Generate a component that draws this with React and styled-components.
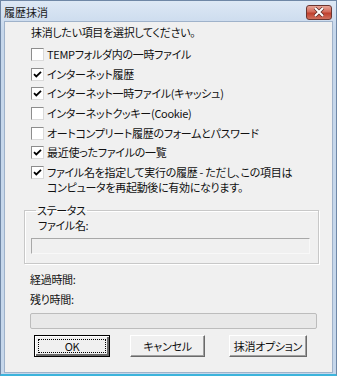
import React from "react";
import styled, { createGlobalStyle } from "styled-components";

const Global = createGlobalStyle`
  html, body { margin: 0; padding: 0; background: #ffffff; }
  body { font-family: "Noto Sans CJK JP", "Noto Sans", sans-serif; font-size: 11px; color: #000; }
  * { box-sizing: border-box; }
`;

const Window = styled.div`
  width: 337px;
  height: 376px;
  display: flex;
  flex-direction: column;
  background: linear-gradient(#dde8f5, #c6d7eb 30px, #c6d7eb);
  border: 1px solid #6f87a6;
  border-bottom: 2px solid #3cb4dc;
  padding: 0 3px 1px 3px;
`;

const TitleBar = styled.div`
  height: 20px;
  display: flex;
  align-items: center;
  justify-content: space-between;
  padding: 0 1px 0 0;
`;

const Title = styled.span`
  font-size: 11px;
  line-height: 15px;
  font-feature-settings: "palt";
  color: #1a1a1a;
  margin-top: 2px;
`;

const CloseButton = styled.div`
  width: 26px;
  height: 15px;
  margin-top: 2px;
  border-radius: 3px;
  border: 1px solid #6a3530;
  background: linear-gradient(#e8a496, #d26a5a 45%, #c0402d 55%, #d0705e);
  display: flex;
  align-items: center;
  justify-content: center;
`;

const Body = styled.div`
  flex: 1;
  background: #f0f0f0;
  border: 1px solid #9fb2ca;
  display: flex;
  flex-direction: column;
  padding: 3px 14px 0 19px;
  font-feature-settings: "palt";
  letter-spacing: -0.3px;
  line-height: 15px;
  color: #111;
`;

const Text = styled.div`
  margin-left: ${(p) => p.$indent || 0}px;
  margin-top: ${(p) => p.$top || 0}px;
  white-space: nowrap;
`;

const List = styled.div`
  display: flex;
  flex-direction: column;
  margin-top: 5px;
  margin-left: 7px;
`;

const Row = styled.div`
  display: flex;
  align-items: flex-start;
  padding: 2.3px 0;
`;

const Box = styled.span`
  flex: none;
  width: 13px;
  height: 13px;
  margin-top: 1px;
  margin-right: 3px;
  background: #fff;
  border: 1px solid;
  border-color: #8d8d8d #dadada #dadada #8d8d8d;
  display: flex;
  align-items: center;
  justify-content: center;
`;

const Label = styled.span`
  white-space: nowrap;
`;

const Group = styled.fieldset`
  margin: 6px 0 0 0;
  padding: 0 8px 9px 6px;
  border: 1px solid #c8c8c8;
  box-shadow: inset 1px 1px #fff, 1px 1px #fff;
  width: 295px;
`;

const Legend = styled.legend`
  padding: 0 1px;
  margin-left: 5px;
  line-height: 15px;
`;

const Field = styled.div`
  margin-top: 5px;
  width: 279px;
  height: 16px;
  background: #f0f0f0;
  border: 1px solid;
  border-color: #a8a8a8 #f8f8f8 #f8f8f8 #a8a8a8;
`;

const Progress = styled.div`
  margin-top: 6px;
  margin-left: 6px;
  width: 287px;
  height: 16px;
  border: 1px solid #bcbcbc;
  border-radius: 2px;
  background: #e8e8e8;
`;

const Buttons = styled.div`
  display: flex;
  margin-top: 6px;
  margin-left: 10px;
`;

const Button = styled.div`
  width: ${(p) => p.$w || 75}px;
  height: 22px;
  margin-left: ${(p) => p.$gap || 0}px;
  background: #f0f0f0;
  display: flex;
  align-items: center;
  justify-content: center;
  white-space: nowrap;
  border: 1px solid;
  border-color: ${(p) => (p.$default ? "#000" : "#fff #6a6a6a #6a6a6a #fff")};
  box-shadow: ${(p) =>
    p.$default
      ? "inset 1px 1px #fff, inset -2px -2px #6a6a6a"
      : "inset -1px -1px #a0a0a0"};
  position: relative;
`;

const Focus = styled.span`
  position: absolute;
  left: 3px;
  top: 3px;
  right: 3px;
  bottom: 3px;
  border: 1px dotted #000;
`;

const Check = () => (
  <svg width="9" height="9" viewBox="0 0 9 9">
    <path d="M1 4.2 L3.3 6.5 L8 1.8" fill="none" stroke="#000" strokeWidth="1.8" />
  </svg>
);

const items = [
  { t: "TEMPフォルダ内の一時ファイル", c: false },
  { t: "インターネット履歴", c: true },
  { t: "インターネット一時ファイル(キャッシュ)", c: true },
  { t: "インターネットクッキー(Cookie)", c: false },
  { t: "オートコンプリート履歴のフォームとパスワード", c: false },
  { t: "最近使ったファイルの一覧", c: true },
];

export default function App() {
  return (
    <>
      <Global />
      <Window>
        <TitleBar>
          <Title>履歴抹消</Title>
          <CloseButton>
            <svg width="12" height="10" viewBox="0 0 12 10">
              <path d="M2 1 L10 9 M10 1 L2 9" stroke="#5a2a25" strokeWidth="3.4" />
              <path d="M2 1 L10 9 M10 1 L2 9" stroke="#fff" strokeWidth="2" />
            </svg>
          </CloseButton>
        </TitleBar>
        <Body>
          <Text $indent={7}>抹消したい項目を選択してください。</Text>
          <List>
            {items.map((it) => (
              <Row key={it.t}>
                <Box>{it.c && <Check />}</Box>
                <Label>{it.t}</Label>
              </Row>
            ))}
            <Row>
              <Box>
                <Check />
              </Box>
              <Label>
                ファイル名を指定して実行の履歴 - ただし、この項目は
                <br />
                コンピュータを再起動後に有効になります。
              </Label>
            </Row>
          </List>
          <Group>
            <Legend>ステータス</Legend>
            <Text $indent={7}>ファイル名:</Text>
            <Field />
          </Group>
          <Text $indent={6} $top={8}>経過時間:</Text>
          <Text $indent={6} $top={5}>残り時間:</Text>
          <Progress />
          <Buttons>
            <Button $default $w={76}>
              <Focus />
              OK
            </Button>
            <Button $gap={20}>キャンセル</Button>
            <Button $gap={24} $w={78}>抹消オプション</Button>
          </Buttons>
        </Body>
      </Window>
    </>
  );
}
